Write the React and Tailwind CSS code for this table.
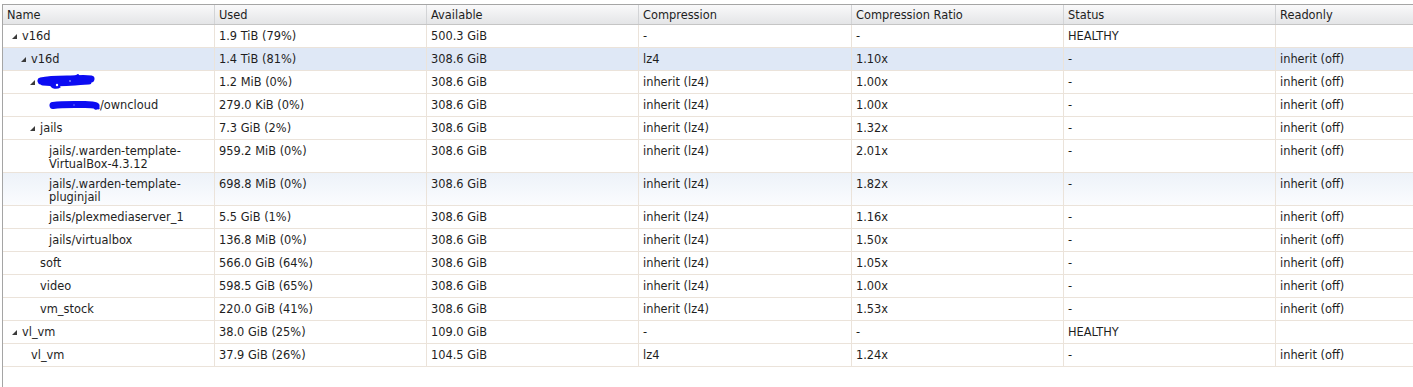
const columns = ["Name", "Used", "Available", "Compression", "Compression Ratio", "Status", "Readonly"];

const widths = ["w-[212px]", "w-[212px]", "w-[212px]", "w-[213px]", "w-[212px]", "w-[212px]", "flex-1"];

const indents = ["pl-[9px]", "pl-[18px]", "pl-[27px]", "pl-[36px]"];

const rows = [
    { level: 0, open: true, name: "v16d", used: "1.9 TiB (79%)", avail: "500.3 GiB", comp: "-", ratio: "-", status: "HEALTHY", ro: "" },
    { level: 1, open: true, name: "v16d", used: "1.4 TiB (81%)", avail: "308.6 GiB", comp: "lz4", ratio: "1.10x", status: "-", ro: "inherit (off)", selected: true },
    { level: 2, open: true, scribble: "big", name: "", used: "1.2 MiB (0%)", avail: "308.6 GiB", comp: "inherit (lz4)", ratio: "1.00x", status: "-", ro: "inherit (off)" },
    { level: 3, scribble: "small", name: "/owncloud", used: "279.0 KiB (0%)", avail: "308.6 GiB", comp: "inherit (lz4)", ratio: "1.00x", status: "-", ro: "inherit (off)" },
    { level: 2, open: true, name: "jails", used: "7.3 GiB (2%)", avail: "308.6 GiB", comp: "inherit (lz4)", ratio: "1.32x", status: "-", ro: "inherit (off)" },
    { level: 3, name: ["jails/.warden-template-", "VirtualBox-4.3.12"], used: "959.2 MiB (0%)", avail: "308.6 GiB", comp: "inherit (lz4)", ratio: "2.01x", status: "-", ro: "inherit (off)" },
    { level: 3, name: ["jails/.warden-template-", "pluginjail"], used: "698.8 MiB (0%)", avail: "308.6 GiB", comp: "inherit (lz4)", ratio: "1.82x", status: "-", ro: "inherit (off)", hover: true },
    { level: 3, name: "jails/plexmediaserver_1", used: "5.5 GiB (1%)", avail: "308.6 GiB", comp: "inherit (lz4)", ratio: "1.16x", status: "-", ro: "inherit (off)" },
    { level: 3, name: "jails/virtualbox", used: "136.8 MiB (0%)", avail: "308.6 GiB", comp: "inherit (lz4)", ratio: "1.50x", status: "-", ro: "inherit (off)" },
    { level: 2, name: "soft", used: "566.0 GiB (64%)", avail: "308.6 GiB", comp: "inherit (lz4)", ratio: "1.05x", status: "-", ro: "inherit (off)" },
    { level: 2, name: "video", used: "598.5 GiB (65%)", avail: "308.6 GiB", comp: "inherit (lz4)", ratio: "1.00x", status: "-", ro: "inherit (off)" },
    { level: 2, name: "vm_stock", used: "220.0 GiB (41%)", avail: "308.6 GiB", comp: "inherit (lz4)", ratio: "1.53x", status: "-", ro: "inherit (off)" },
    { level: 0, open: true, name: "vl_vm", used: "38.0 GiB (25%)", avail: "109.0 GiB", comp: "-", ratio: "-", status: "HEALTHY", ro: "" },
    { level: 1, name: "vl_vm", used: "37.9 GiB (26%)", avail: "104.5 GiB", comp: "lz4", ratio: "1.24x", status: "-", ro: "inherit (off)" },
];

// expanded-node triangle
const Arrow = () => (
    <svg width="5" height="5" viewBox="0 0 5 5" className="mt-[4px]">
        <polygon points="5,0 5,5 0,5" fill="#3a3a3a" />
    </svg>
);

// blue marker over the redacted dataset names
const Scribble = ({ kind }) =>
    kind === "big" ? (
        <svg width="58" height="15" viewBox="0 0 58 15" className="-ml-[3px] -mt-[2px] shrink-0">
            <path d="M4 7 C12 5 22 5 30 5 S48 4 54 5" stroke="#0c0cf2" strokeWidth="7" fill="none" strokeLinecap="round" />
            <path d="M6 9 C16 10 26 10 38 9 S50 8 52 8" stroke="#0c0cf2" strokeWidth="5" fill="none" strokeLinecap="round" />
            <path d="M14 10 C15 14 20 14 23 12" stroke="#0c0cf2" strokeWidth="3" fill="none" />
            <path d="M37 4 L42 1" stroke="#0c0cf2" strokeWidth="3" />
            <circle cx="20" cy="11" r="1.2" fill="#ffffff" />
            <circle cx="33" cy="7" r="0.9" fill="#8890ff" />
        </svg>
    ) : (
        <svg width="51" height="11" viewBox="0 0 51 11" className="mt-[1px] shrink-0">
            <path d="M4 5.5 C14 4 26 4.5 36 4.5 S45 5 47 6" stroke="#0c0cf2" strokeWidth="7" fill="none" strokeLinecap="round" />
            <path d="M47 5 L50 9" stroke="#0c0cf2" strokeWidth="2.5" />
            <circle cx="25" cy="5" r="0.7" fill="#8890ff" />
        </svg>
    );

const Row = ({ row }) => {
    const tall = Array.isArray(row.name);
    const bg = row.selected
        ? "bg-[#dfe8f6]"
        : row.hover
        ? "bg-linear-to-b from-[#edf2f9] to-[#fbfcfe]"
        : "bg-white";
    const cells = [row.used, row.avail, row.comp, row.ratio, row.status, row.ro];

    return (
        <div className={`flex border-b border-[#ebe3da] ${tall ? "h-[33px]" : "h-[23px]"} ${bg}`}>
            {/* Name */}
            <div className={`${widths[0]} shrink-0 flex border-r border-[#ebe3da] pt-[5px] ${indents[row.level]}`}>
                <div className="w-[10px] shrink-0">{row.open && <Arrow />}</div>
                <div className="flex leading-[13px] whitespace-nowrap">
                    {row.scribble && <Scribble kind={row.scribble} />}
                    {tall ? (
                        <span>
                            {row.name[0]}
                            <br />
                            {row.name[1]}
                        </span>
                    ) : (
                        <span>{row.name}</span>
                    )}
                </div>
            </div>

            {cells.map((c, i) => (
                <div
                    key={i}
                    className={`${widths[i + 1]} shrink-0 pl-[4px] pt-[5px] leading-[13px] whitespace-nowrap ${i < 5 ? "border-r border-[#ebe3da]" : ""}`}
                >
                    {c}
                </div>
            ))}
        </div>
    );
};

const App = () => {
    return (
        <div className="h-[387px] w-[1413px] overflow-hidden bg-white pt-[4px] pl-[2px] font-['DejaVu_Sans',sans-serif] text-[11.4px] text-[#1e1e1e]">
            <div className="h-full border-l border-t border-[#a5a5a5]">
                {/* Header */}
                <div className="flex h-[20px] border-b border-[#c5c5c5] bg-linear-to-b from-[#f9f9fa] to-[#e4e5e7]">
                    {columns.map((c, i) => (
                        <div
                            key={c}
                            className={`${widths[i]} shrink-0 flex items-center pl-[4px] pt-[2px] ${i < 6 ? "border-r border-[#d3d4d6]" : ""}`}
                        >
                            {c}
                        </div>
                    ))}
                </div>

                {/* Body */}
                {rows.map((r, i) => (
                    <Row key={i} row={r} />
                ))}
            </div>
        </div>
    );
};

export default App;
